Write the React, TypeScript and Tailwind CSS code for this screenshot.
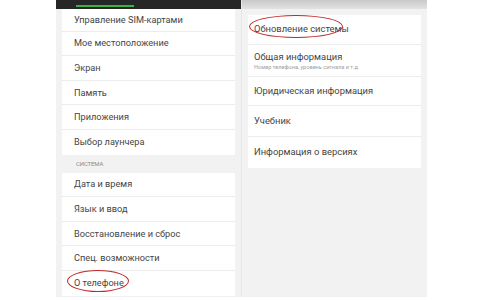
import React from "react";

const leftGroup1 = [
  "Управление SIM-картами",
  "Мое местоположение",
  "Экран",
  "Память",
  "Приложения",
  "Выбор лаунчера",
];
const leftGroup2 = [
  "Дата и время",
  "Язык и ввод",
  "Восстановление и сброс",
  "Спец. возможности",
];

function Row({
  children,
  last,
  first,
}: {
  children: React.ReactNode;
  last?: boolean;
  first?: boolean;
}) {
  return (
    <div
      className={
        (first ? "h-[22.6px] " : "h-[24.6px] ") +
        "flex items-center pl-[12px] text-[9.2px] text-[#454545] bg-white " +
        (last ? "" : "border-b border-[#ececec]")
      }
    >
      {children}
    </div>
  );
}

export default function App() {
  return (
    <div
      className="w-[480px] h-[300px] bg-white flex overflow-hidden"
      style={{ fontFamily: "Roboto, 'Noto Sans', sans-serif" }}
    >
      <div className="w-[56px]" />
      {/* Left screen */}
      <div className="w-[185px] h-[297px] bg-[#f2f2f2] flex flex-col">
        <div className="h-[9px] bg-[#262626] relative">
          <div className="absolute left-[20px] top-[5px] w-[58px] h-[1.5px] bg-[#3cb043]" />
        </div>
        <div className="mx-[6px] flex flex-col">
          {leftGroup1.map((t, i) => (
            <Row key={t} first={i === 0} last={i === leftGroup1.length - 1}>
              {t}
            </Row>
          ))}
        </div>
        <div className="h-[18px] flex items-center pl-[20px] text-[6px] text-[#8a8a8a] tracking-tight">
          СИСТЕМА
        </div>
        <div className="mx-[6px] flex flex-col">
          {leftGroup2.map((t) => (
            <Row key={t}>{t}</Row>
          ))}
          <Row last>
            <span className="relative">
              О телефоне
              <span className="absolute left-[-7px] top-[-6px] w-[62px] h-[22px] rounded-[50%] border-[1.5px] border-[#c0282d]" />
            </span>
          </Row>
        </div>
      </div>
      {/* Right screen */}
      <div className="w-[186px] h-[297px] bg-[#f2f2f2] flex flex-col border-l border-[#e6e6e6]">
        <div className="h-[9px] bg-gradient-to-b from-[#c9c9c9] to-[#e2e2e2]" />
        <div className="mt-[6px] mx-[6px] bg-white flex flex-col">
          <div className="h-[30px] flex items-center pl-[6px] text-[9.4px] text-[#454545] border-b border-[#ececec]">
            <span className="relative">
              Обновление системы
              <span className="absolute left-[-5px] top-[-7px] w-[94px] h-[23px] rounded-[50%] border-[1.5px] border-[#c0282d]" />
            </span>
          </div>
          <div className="h-[32px] flex flex-col justify-center pl-[6px] border-b border-[#ececec]">
            <div className="text-[9.4px] text-[#454545] leading-[12px]">Общая информация</div>
            <div className="text-[5.6px] text-[#a0a0a0] leading-[8px]">
              Номер телефона, уровень сигнала и т.д.
            </div>
          </div>
          <div className="h-[29px] flex items-center pl-[6px] text-[9.4px] text-[#454545] border-b border-[#ececec]">
            Юридическая информация
          </div>
          <div className="h-[31px] flex items-center pl-[6px] text-[9.4px] text-[#454545] border-b border-[#ececec]">
            Учебник
          </div>
          <div className="h-[31px] flex items-center pl-[6px] text-[9.4px] text-[#454545]">
            Информация о версиях
          </div>
        </div>
      </div>
    </div>
  );
}
